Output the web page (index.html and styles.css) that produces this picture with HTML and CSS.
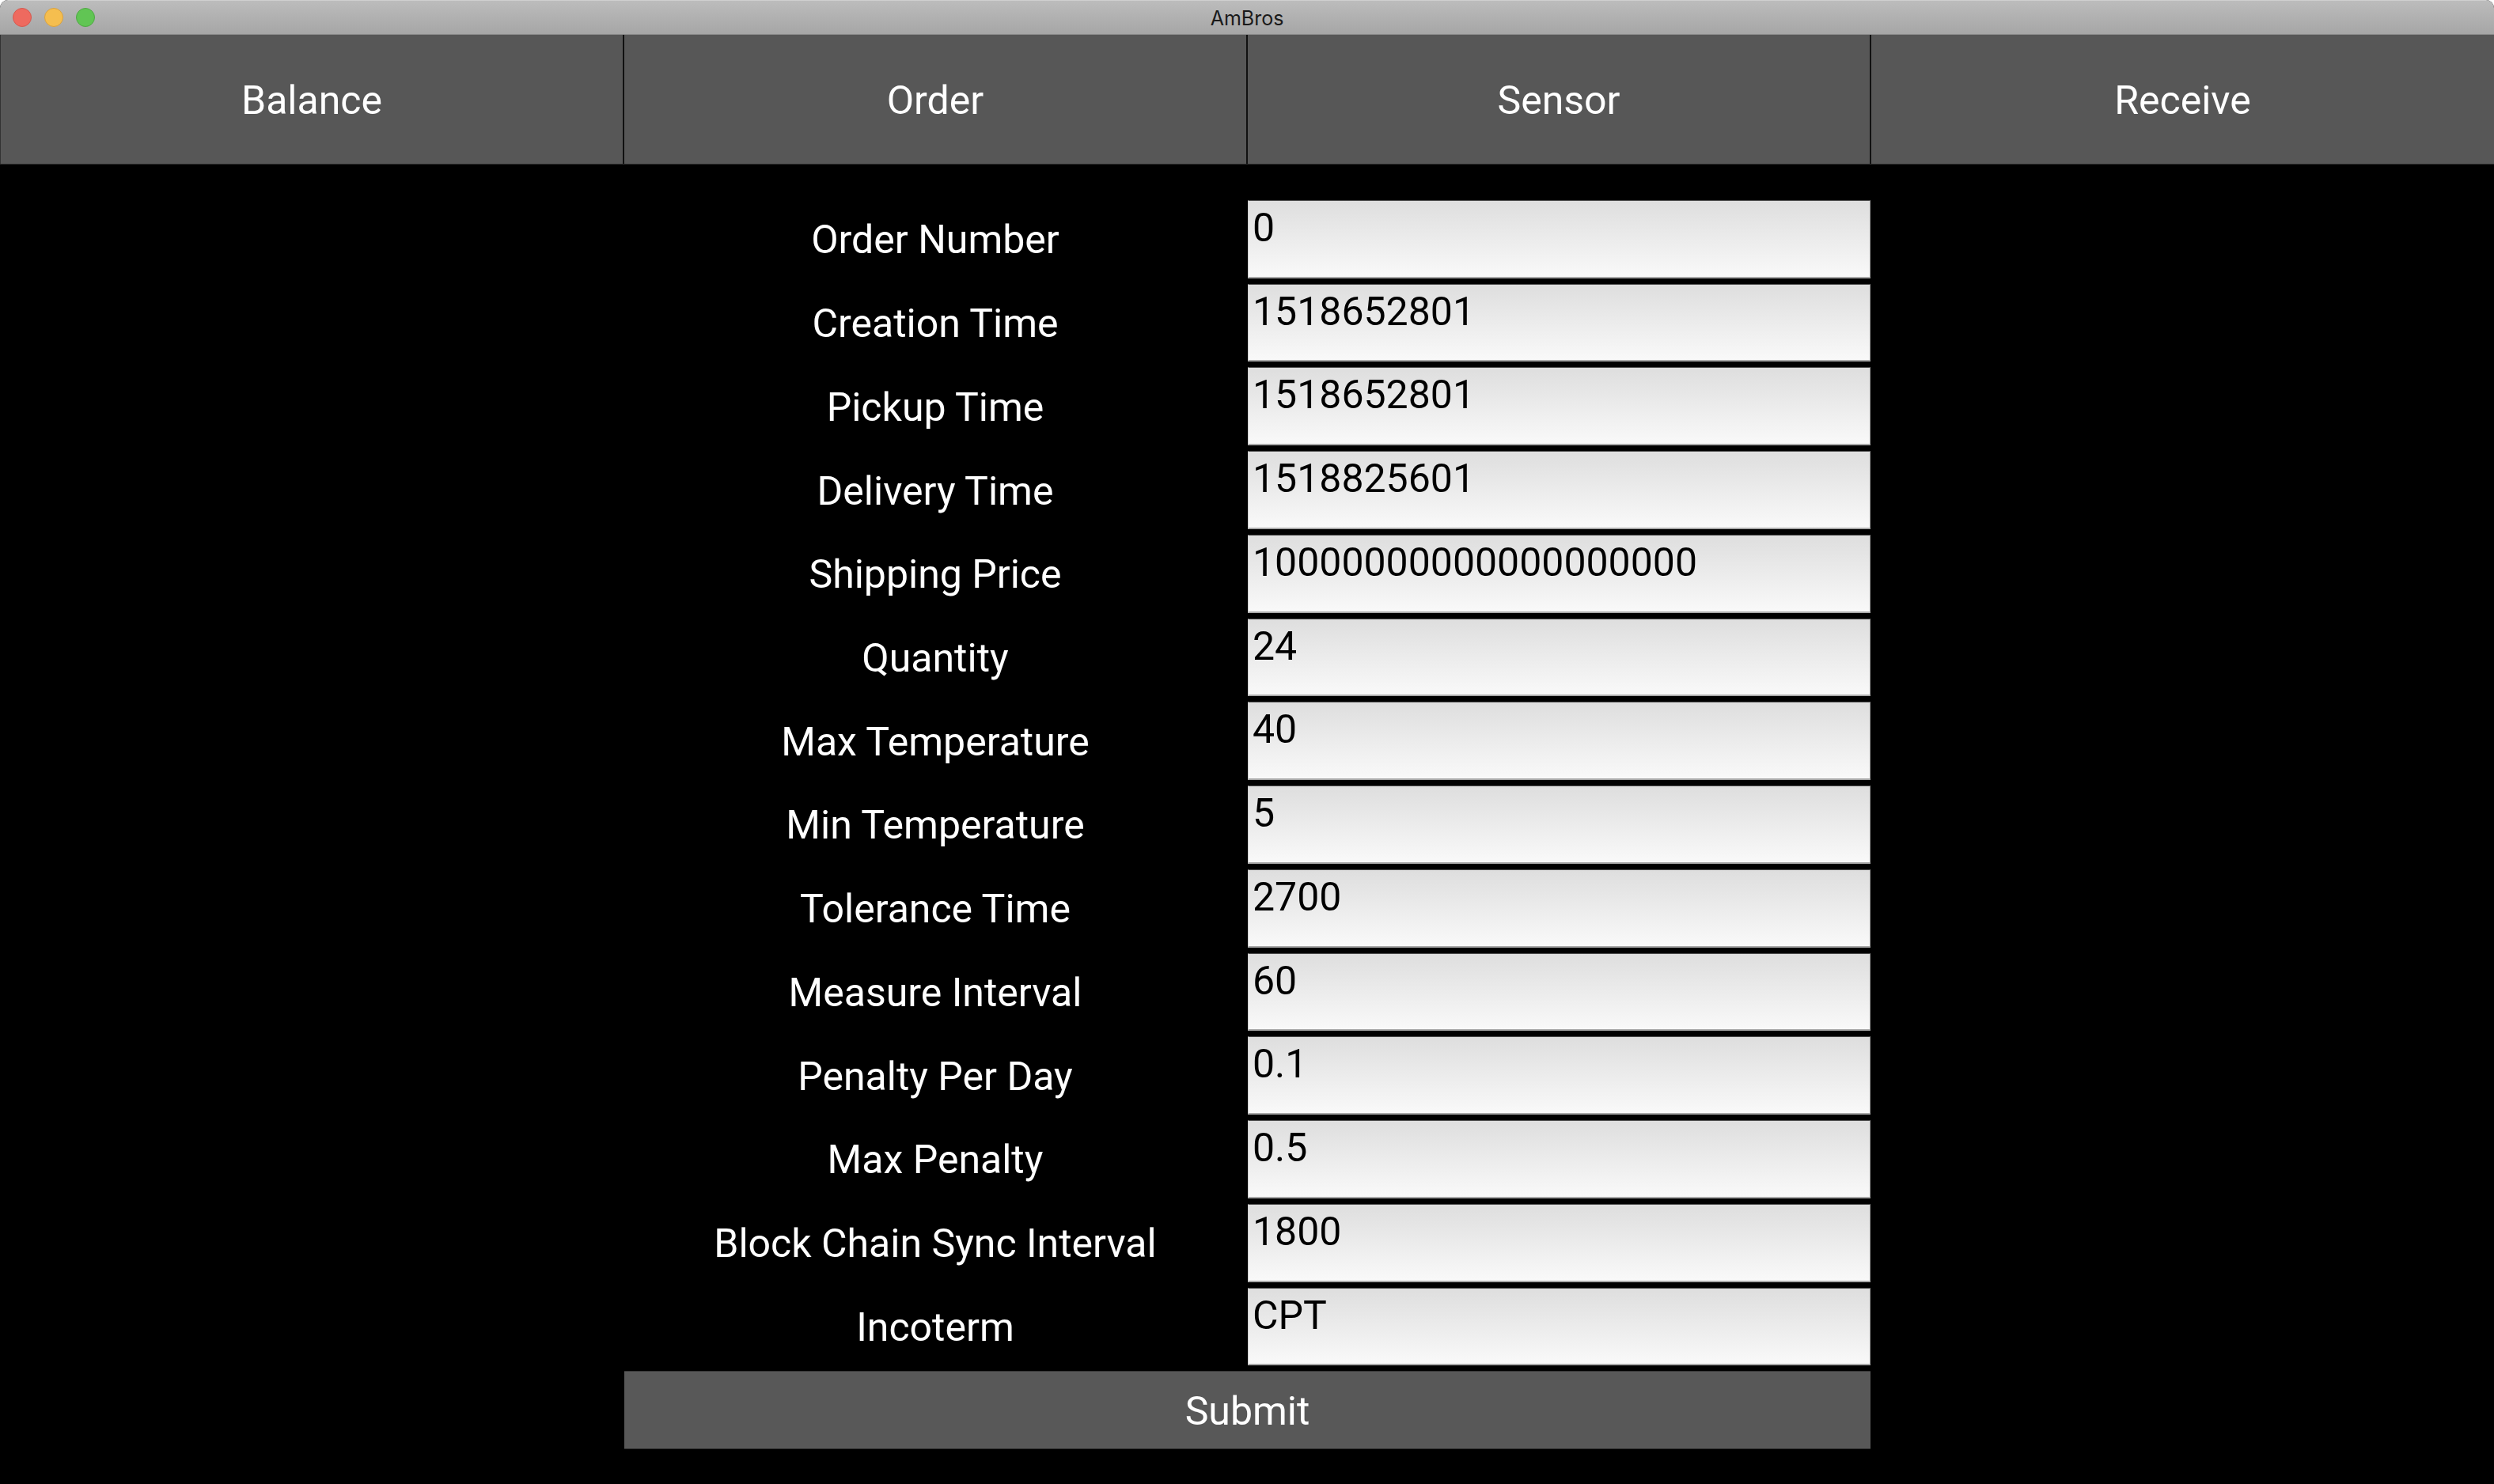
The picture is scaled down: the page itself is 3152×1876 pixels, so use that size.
FILE: index.html
```html
<!DOCTYPE html>
<html lang="en">
<head>
<meta charset="utf-8">
<title>AmBros</title>
<link rel="stylesheet" href="styles.css">
</head>
<body>
<div class="window">
  <header class="titlebar">
    <div class="lights">
      <span class="light red"></span>
      <span class="light yellow"></span>
      <span class="light green"></span>
    </div>
    <div class="title">AmBros</div>
  </header>
  <nav class="tabs">
    <div class="tab">Balance</div>
    <div class="tab">Order</div>
    <div class="tab">Sensor</div>
    <div class="tab">Receive</div>
  </nav>
  <main class="content">
    <form class="form">
      <label class="label">Order Number</label><div class="input">0</div>
      <label class="label">Creation Time</label><div class="input">1518652801</div>
      <label class="label">Pickup Time</label><div class="input">1518652801</div>
      <label class="label">Delivery Time</label><div class="input">1518825601</div>
      <label class="label">Shipping Price</label><div class="input">10000000000000000000</div>
      <label class="label">Quantity</label><div class="input">24</div>
      <label class="label">Max Temperature</label><div class="input">40</div>
      <label class="label">Min Temperature</label><div class="input">5</div>
      <label class="label">Tolerance Time</label><div class="input">2700</div>
      <label class="label">Measure Interval</label><div class="input">60</div>
      <label class="label">Penalty Per Day</label><div class="input">0.1</div>
      <label class="label">Max Penalty</label><div class="input">0.5</div>
      <label class="label">Block Chain Sync Interval</label><div class="input">1800</div>
      <label class="label">Incoterm</label><div class="input">CPT</div>
      <div class="submit">Submit</div>
    </form>
  </main>
</div>
</body>
</html>
```

FILE: styles.css
```css
html, body {
  margin: 0;
  padding: 0;
  background: #ffffff;
}

body {
  width: 3152px;
  height: 1876px;
  overflow: hidden;
  font-family: Roboto, "Noto Sans", sans-serif;
}

.window {
  width: 3152px;
  height: 1876px;
  display: flex;
  flex-direction: column;
  background: #000;
  border-radius: 10px 10px 0 0;
  overflow: hidden;
}

.titlebar {
  position: relative;
  background: linear-gradient(#bcbcbc, #a6a6a6);
  border-top: 1px solid #d0d0d0;
  border-bottom: 1px solid #8c8c8c;
  box-sizing: border-box;
  height: 44px;
  flex: 0 0 44px;
  display: flex;
  align-items: center;
  justify-content: center;
}

.lights {
  position: absolute;
  left: 16px;
  top: 9px;
  display: flex;
  gap: 16px;
}

.light {
  width: 24px;
  height: 24px;
  border-radius: 50%;
  box-sizing: border-box;
}

.red { background: #ee6a5f; border: 1px solid #d45a50; }
.yellow { background: #f5be4f; border: 1px solid #d9a23f; }
.green { background: #61c554; border: 1px solid #4ea843; }

.title {
  font-family: Inter, "Liberation Sans", sans-serif;
  font-size: 25px;
  color: #1a1a1a;
  margin-top: 1px;
}

.tabs {
  flex: 0 0 164px;
  display: grid;
  grid-template-columns: repeat(4, 1fr);
  border-bottom: 1px solid #2c2c2c;
  box-sizing: border-box;
  background: #000;
}

.tab {
  background: #575757;
  border-left: 1px solid #111;
  border-right: 1px solid #111;
  display: flex;
  align-items: center;
  justify-content: center;
  padding-top: 3px;
  color: #ffffff;
  font-size: 50px;
}

.tab:first-child { border-left-color: #333; }
.tab:last-child { border-right: none; }

.content {
  flex: 1;
  padding: 45px 0 44px;
  box-sizing: border-box;
  display: flex;
  justify-content: center;
}

.form {
  width: 1576px;
  display: grid;
  grid-template-columns: 788px 787px;
  grid-template-rows: repeat(15, 1fr);
  row-gap: 7px;
  column-gap: 1px;
  margin: 0;
}

.label {
  display: flex;
  align-items: center;
  justify-content: center;
  padding-top: 2px;
  color: #ffffff;
  font-size: 50px;
}

.input {
  background: linear-gradient(#dedede, #f9f9f9);
  border-top: 1px solid #4c4c4c;
  border-bottom: 2px solid #a9a9a9;
  border-left: 1px solid #cfcfcf;
  border-right: 1px solid #9a9a9a;
  box-sizing: border-box;
  padding: 5px 5px;
  color: #000;
  font-size: 50px;
  line-height: 58px;
}

.submit {
  grid-column: 1 / 3;
  margin-left: 1px;
  background: #585858;
  border-top: 1px solid #3a3a3a;
  border-bottom: 1px solid #2f2f2f;
  box-sizing: border-box;
  display: flex;
  align-items: center;
  justify-content: center;
  padding-top: 2px;
  color: #ffffff;
  font-size: 50px;
}
```
